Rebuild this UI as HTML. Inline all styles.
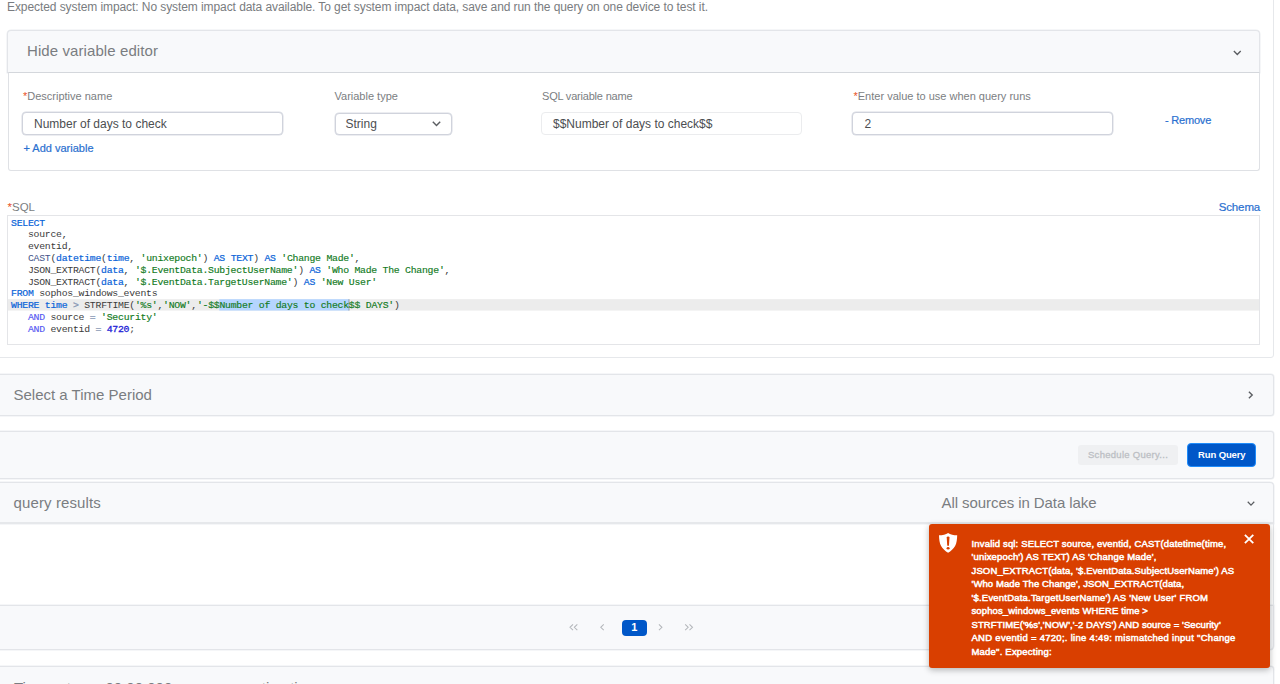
<!DOCTYPE html>
<html lang="en">
<head>
<meta charset="utf-8">
<title>Live Discover - Query</title>
<style>
*{box-sizing:border-box;margin:0;padding:0}
html,body{width:1280px;height:684px;overflow:hidden;background:#fff}
body{position:relative;font-family:"Liberation Sans",Arial,sans-serif;color:#6a6d71;-webkit-font-smoothing:antialiased}
.abs{position:absolute;white-space:nowrap}
.t{position:absolute;white-space:nowrap;line-height:1}
.panel{position:absolute;background:#f8f9fb;border:1px solid #e3e5e9;border-radius:3px;box-shadow:0 0 0 0.5px #eceef1}
.h15{font-size:15px;color:#7a7d81}
.lbl{font-size:11px;color:#7b7e82}
.req{color:#e8501f}
.inp{position:absolute;height:23px;border:1px solid #d0d3dc;border-radius:4px;background:#fff;box-shadow:0 0 0 .5px #d9dce4}
.inp.ro{border-color:#ebecee;box-shadow:none}
.itx{font-size:12px;color:#4c4e51}
.link{color:#2a70d0;-webkit-text-stroke:0.2px #2a70d0}
svg{position:absolute;overflow:visible}
/* code editor */
#ed{position:absolute;left:7px;top:215px;width:1253px;height:130px;border:1px solid #e4e5e8;background:#fff;overflow:hidden}
#ed .ln{position:absolute;left:0;width:100%;height:11.8px;line-height:11.8px;padding-left:3px;white-space:pre;font-family:"Liberation Mono","DejaVu Sans Mono",monospace;font-size:9.8px;letter-spacing:-0.25px;color:#3a3a3a}
#ed .act{background:#ececec}
.k{color:#0a64d8;-webkit-text-stroke:0.2px #0a64d8}.s{color:#117a1c;-webkit-text-stroke:0.15px #117a1c}.f{color:#44558a}.o{color:#8696b4;-webkit-text-stroke:0.3px #8696b4}.n{color:#2222d6;-webkit-text-stroke:0.3px #2222d6}.c{color:#5558f2;-webkit-text-stroke:0.15px #5558f2}
.sel{background:#b5d5ff}
/* toast */
#toast{position:absolute;left:929px;top:524px;width:341px;height:143.5px;background:#d93f00;border-radius:3px;box-shadow:0 2px 6px rgba(0,0,0,.28);color:#fff}
#toast .msg{position:absolute;left:42.5px;top:12.8px;width:290px;font-size:9.5px;line-height:13.5px;font-weight:normal;white-space:nowrap;letter-spacing:0.17px;-webkit-text-stroke:0.5px #fff}
</style>
</head>
<body>

<!-- outer card (top part cut off) -->
<div class="abs" style="left:-6px;top:-10px;width:1280px;height:368px;border:1px solid #e6e8eb;border-radius:3px;background:#fff"></div>

<div class="t" id="t-top" style="left:7px;top:0.7px;font-size:12px;letter-spacing:-0.08px;color:#797c80">Expected system impact: No system impact data available. To get system impact data, save and run the query on one device to test it.</div>

<!-- variable editor header -->
<div class="panel" style="left:7px;top:30px;width:1253px;height:43px;border-radius:4px 4px 0 0;border-bottom-color:#d9dce0"></div>
<div class="t h15" id="t-hide" style="left:27px;top:43px;letter-spacing:0.09px">Hide variable editor</div>
<svg style="left:1233.3px;top:49.5px" width="8.6" height="6" viewBox="0 0 10 7"><path d="M1 1.2 L5 5.2 L9 1.2" fill="none" stroke="#5a5d61" stroke-width="1.6"/></svg>

<!-- variable editor body -->
<div class="abs" style="left:8px;top:72px;width:1251.5px;height:99px;border:1px solid #dfe1e5;border-top-color:#d4d7dc;background:#fff;border-radius:0 0 3px 3px"></div>

<div class="t lbl" id="t-l1" style="left:23px;top:90.5px"><span class="req">*</span>Descriptive name</div>
<div class="inp" style="left:22px;top:111.75px;width:261px"></div>
<div class="t itx" id="t-i1" style="left:34px;top:118px">Number of days to check</div>
<div class="t lbl link" id="t-add" style="left:23.5px;top:143.4px">+ Add variable</div>

<div class="t lbl" id="t-l2" style="left:334.5px;top:90.5px">Variable type</div>
<div class="inp" style="left:335px;top:113px;width:117px;height:22px"></div>
<div class="t itx" id="t-i2" style="left:345.5px;top:118px">String</div>
<svg style="left:431.5px;top:121px" width="9" height="6" viewBox="0 0 9 6"><path d="M0.8 0.8 L4.5 4.6 L8.2 0.8" fill="none" stroke="#5a5d61" stroke-width="1.4"/></svg>

<div class="t lbl" id="t-l3" style="left:542px;top:90.5px;letter-spacing:-0.2px">SQL variable name</div>
<div class="inp ro" style="left:541px;top:111.75px;width:261px"></div>
<div class="t itx" id="t-i3" style="left:553px;top:118px">$$Number of days to check$$</div>

<div class="t lbl" id="t-l4" style="left:853.5px;top:90.5px"><span class="req">*</span>Enter value to use when query runs</div>
<div class="inp" style="left:852px;top:111.75px;width:261px"></div>
<div class="t itx" id="t-i4" style="left:864.5px;top:118px">2</div>
<div class="t lbl link" id="t-rem" style="left:1165px;top:115px;letter-spacing:-0.2px">- Remove</div>

<!-- SQL -->
<div class="t" id="t-sql" style="left:7.5px;top:201.5px;font-size:11.5px;color:#7b7e82"><span class="req">*</span>SQL</div>
<div class="t link" id="t-schema" style="left:1218.7px;top:201.5px;font-size:11.5px;letter-spacing:-0.13px">Schema</div>

<div id="ed">
<div class="ln" style="top:1.5px"><span class="k">SELECT</span></div>
<div class="ln" style="top:13.3px">   source,</div>
<div class="ln" style="top:25.1px">   eventid,</div>
<div class="ln" style="top:36.9px">   <span class="f">CAST</span>(<span class="k">datetime</span>(<span class="k">time</span>, <span class="s">'unixepoch'</span>) <span class="k">AS</span> <span class="k">TEXT</span>) <span class="k">AS</span> <span class="s">'Change Made'</span>,</div>
<div class="ln" style="top:48.7px">   JSON_EXTRACT(<span class="k">data</span>, <span class="s">'$.EventData.SubjectUserName'</span>) <span class="k">AS</span> <span class="s">'Who Made The Change'</span>,</div>
<div class="ln" style="top:60.5px">   JSON_EXTRACT(<span class="k">data</span>, <span class="s">'$.EventData.TargetUserName'</span>) <span class="k">AS</span> <span class="s">'New User'</span></div>
<div class="ln" style="top:72.3px"><span class="k">FROM</span> sophos_windows_events</div>
<svg style="left:0;top:0" width="1251" height="128"><rect x="0" y="83.2" width="1251" height="11.35" fill="#ececec"/><rect x="211.3" y="83.2" width="129.6" height="11.35" fill="#b5d5ff"/><rect x="340.6" y="83.2" width="0.8" height="11.35" fill="#7a8a9a"/></svg>
<div class="ln" style="top:84.1px"><span class="k">WHERE</span> <span class="k">time</span> <span class="o">&gt;</span> STRFTIME(<span class="s">'%s'</span>,<span class="s">'NOW'</span>,<span class="s">'-$$Number of days to check$$ DAYS'</span>)</div>
<div class="ln" style="top:95.9px">   <span class="c">AND</span> source <span class="o">=</span> <span class="s">'Security'</span></div>
<div class="ln" style="top:107.7px">   <span class="c">AND</span> eventid <span class="o">=</span> <span class="n">4720</span>;</div>
</div>

<!-- time period -->
<div class="panel" style="left:-6px;top:373.5px;width:1280px;height:42px"></div>
<div class="t h15" id="t-time" style="left:13.5px;top:387px">Select a Time Period</div>
<svg style="left:1248.4px;top:391.1px" width="5.3" height="7.9" viewBox="0 0 6 9"><path d="M1 0.8 L4.8 4.5 L1 8.2" fill="none" stroke="#5a5d61" stroke-width="1.55"/></svg>

<!-- buttons -->
<div class="panel" style="left:-6px;top:431px;width:1280px;height:47.5px"></div>
<div class="abs" style="left:1078px;top:445px;width:99.5px;height:20px;background:#eff0f2;border-radius:3px"></div>
<div class="t" id="t-sched" style="left:1088px;top:450px;font-size:9.5px;letter-spacing:0.28px;color:#bcbfc4;-webkit-text-stroke:0.3px #bcbfc4">Schedule Query...</div>
<div class="abs" style="left:1187px;top:443px;width:69px;height:24px;background:#0057c8;border:1.5px solid #1f8cfa;border-radius:4px"></div>
<div class="t" id="t-run" style="left:1198px;top:450px;font-size:9.5px;color:#fff;font-weight:bold;letter-spacing:-0.12px">Run Query</div>

<!-- results header -->
<div class="panel" style="left:-6px;top:481.5px;width:1280px;height:42.5px;border-bottom:2px solid #e6e8eb;border-radius:4px 4px 0 0"></div>
<div class="t h15" id="t-qr" style="left:13.5px;top:495px;letter-spacing:0.12px">query results</div>
<div class="t h15" id="t-src" style="left:941.5px;top:495px;letter-spacing:-0.07px">All sources in Data lake</div>
<svg style="left:1247.3px;top:501.4px" width="8" height="5.3" viewBox="0 0 9 6"><path d="M0.8 0.8 L4.5 4.6 L8.2 0.8" fill="none" stroke="#5a5d61" stroke-width="1.4"/></svg>

<!-- results body right border -->
<div class="abs" style="left:1273px;top:524px;width:1px;height:81px;background:#e6e8eb"></div>

<!-- pagination -->
<div class="panel" style="left:-6px;top:604.5px;width:1280px;height:45.5px;border-radius:0 0 4px 4px"></div>
<svg style="left:568.5px;top:624.3px" width="9.5" height="6.6" viewBox="0 0 10 7"><path d="M4.2 0.4 L1 3.5 L4.2 6.6 M8.8 0.4 L5.6 3.5 L8.8 6.6" fill="none" stroke="#b4b7bb" stroke-width="1.1"/></svg>
<svg style="left:600px;top:624.3px" width="4.7" height="6.6" viewBox="0 0 5 7"><path d="M4 0.4 L0.8 3.5 L4 6.6" fill="none" stroke="#b4b7bb" stroke-width="1.1"/></svg>
<div class="abs" style="left:621.5px;top:619.5px;width:25.5px;height:16.5px;background:#0057c8;border-radius:4px"></div>
<div class="t" id="t-pg" style="left:631.2px;top:622px;font-size:11px;color:#fff;font-weight:bold">1</div>
<svg style="left:657.5px;top:624.3px" width="4.7" height="6.6" viewBox="0 0 5 7"><path d="M1 0.4 L4.2 3.5 L1 6.6" fill="none" stroke="#b4b7bb" stroke-width="1.1"/></svg>
<svg style="left:684px;top:624.3px" width="9.5" height="6.6" viewBox="0 0 10 7"><path d="M1.2 0.4 L4.4 3.5 L1.2 6.6 M5.8 0.4 L9 3.5 L5.8 6.6" fill="none" stroke="#b4b7bb" stroke-width="1.1"/></svg>

<!-- bottom panel -->
<div class="panel" style="left:-6px;top:666px;width:1280px;height:40px"></div>
<div class="t h15" id="t-bot" style="left:14px;top:679.5px">Time est:</div><div class="t h15" style="left:105.5px;top:679.5px">00:00:000</div><div class="t h15" style="left:246px;top:679.5px">estimation</div>

<!-- toast -->
<div id="toast">
<svg style="left:10.1px;top:9.1px" width="18.2" height="19.8" viewBox="0 0 18.2 19.8"><path d="M9.1 0 C7 1.6 3.5 2.3 0 2.3 C0.1 6.5 0.5 10 2.1 13.1 C3.7 16 6.3 18.2 9.1 19.8 C11.9 18.2 14.5 16 16.1 13.1 C17.7 10 18.1 6.5 18.2 2.3 C14.7 2.3 11.2 1.6 9.1 0 Z" fill="#fff"/><path d="M7.7 4.6 Q7.7 3.5 9.1 3.5 Q10.5 3.5 10.5 4.6 L10 12 Q9.9 12.9 9.1 12.9 Q8.3 12.9 8.2 12 Z" fill="#d93f00"/><ellipse cx="9.1" cy="15.2" rx="1.5" ry="1.2" fill="#d93f00"/></svg>
<svg style="left:314.7px;top:10.3px" width="10.2" height="10" viewBox="0 0 10 10"><path d="M0.8 0.8 L9.2 9.2 M9.2 0.8 L0.8 9.2" fill="none" stroke="#fff" stroke-width="1.8"/></svg>
<div class="msg" id="t-msg"><span style="letter-spacing:0.17px">Invalid sql: SELECT source, eventid, CAST(datetime(time,</span><br>
<span style="letter-spacing:0.174px">'unixepoch') AS TEXT) AS 'Change Made',</span><br>
<span style="letter-spacing:0.14px">JSON_EXTRACT(data, '$.EventData.SubjectUserName') AS</span><br>
<span style="letter-spacing:0.094px">'Who Made The Change', JSON_EXTRACT(data,</span><br>
<span style="letter-spacing:0.204px">'$.EventData.TargetUserName') AS 'New User' FROM</span><br>
<span style="letter-spacing:0.121px">sophos_windows_events WHERE time &gt;</span><br>
<span style="letter-spacing:0.084px">STRFTIME('%s','NOW','-2 DAYS') AND source = 'Security'</span><br>
<span style="letter-spacing:0.286px">AND eventid = 4720;. line 4:49: mismatched input "Change</span><br>
<span style="letter-spacing:0.207px">Made". Expecting:</span></div>
</div>

</body>
</html>
